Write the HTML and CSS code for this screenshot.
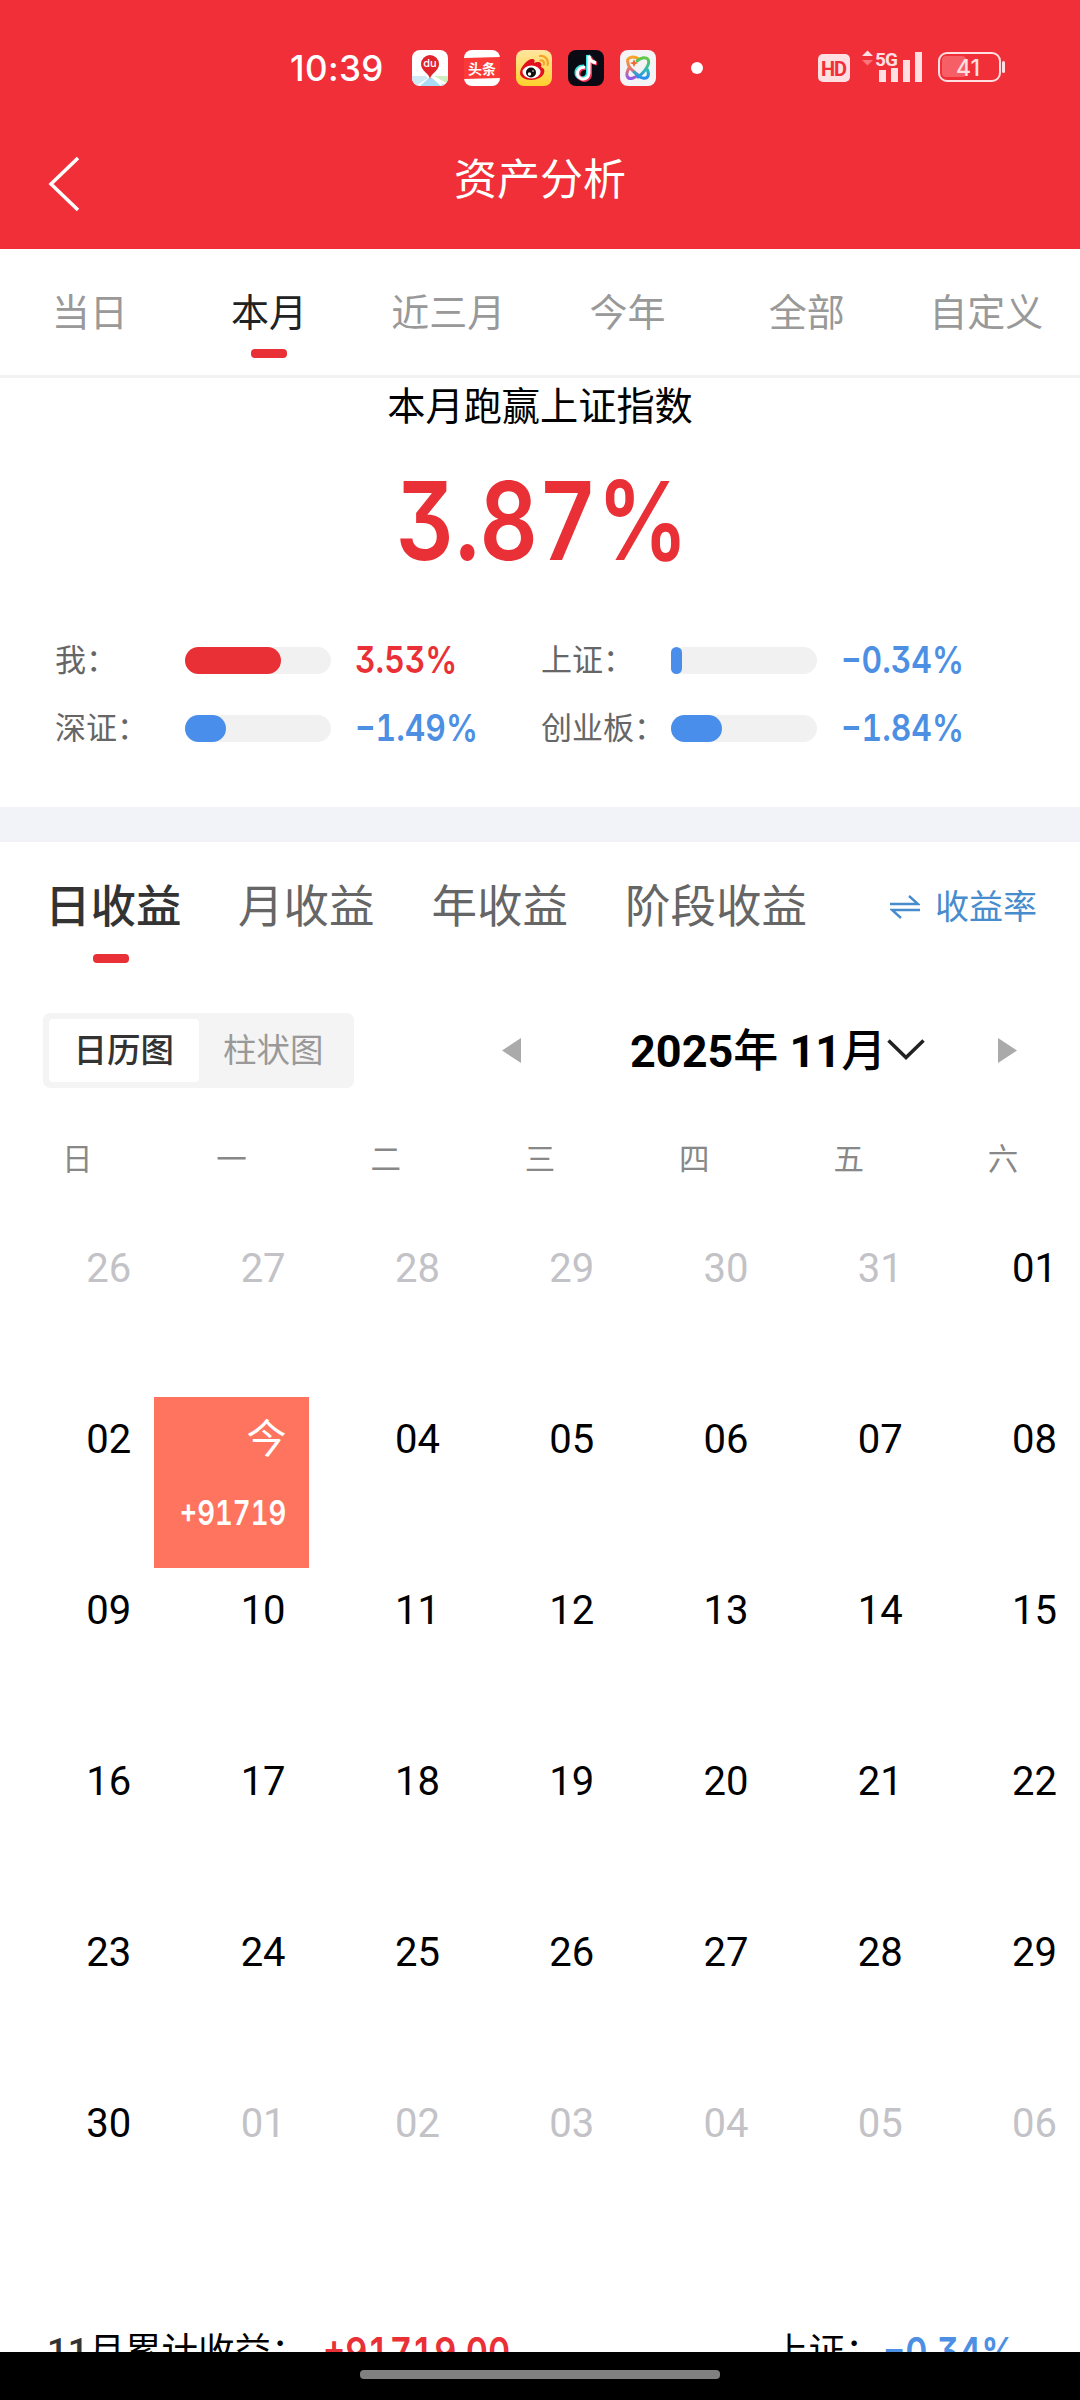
FILE: index.html
```html
<!DOCTYPE html>
<html lang="zh-CN">
<head>
<meta charset="utf-8">
<title>资产分析</title>
<link rel="stylesheet" href="styles.css">
</head>
<body>
<div class="app">
  <header class="top">
    <div class="status">
      <span class="clock">10:39</span>
      <div class="apps">
        <svg width="36" height="36" viewBox="0 0 36 36"><clipPath id="r"><rect width="36" height="36" rx="8"/></clipPath><g clip-path="url(#r)"><rect width="36" height="36" fill="#fff"/><path d="M0 26h13l3 2-12 8H0z" fill="#cdeaf5"/><path d="M22 26h14v8z" fill="#cfeec0"/><path d="M8 36l9-8h3l9 8z" fill="#a9dcf4"/><path d="M29 33l7 3h-5z" fill="#b5e4f5"/><path d="M18 29c-1-6-9-8-9-15a9 9 0 0 1 18 0c0 7-8 9-9 15z" fill="#e0242b"/></g><text x="18" y="17" class="du">du</text></svg>
        <svg width="36" height="36" viewBox="0 0 36 36"><rect width="36" height="36" rx="8" fill="#fff"/><path d="M0 8l36-1v21l-36 1z" fill="#fb3a38"/><text x="18" y="23.500" class="tt">头条</text></svg>
        <svg width="36" height="36" viewBox="0 0 36 36"><defs><linearGradient id="w" x2="0" y2="1"><stop stop-color="#ffe6a0"/><stop offset="1" stop-color="#ffd02c"/></linearGradient></defs><rect width="36" height="36" rx="8" fill="url(#w)"/><path d="M4 23C4 17 12 9 16 9c3 0 3 2 2 4 4-2 9-1 7 4 3 1 4 3 3 6-1 4-7 7-13 7S4 27 4 23z" fill="#e2101c"/><ellipse cx="15.500" cy="22" rx="9" ry="6.500" fill="#fff"/><circle cx="15" cy="22.500" r="5" fill="#111"/><circle cx="13.500" cy="24" r="1.700" fill="#fff"/><circle cx="17" cy="21" r=".8" fill="#fff"/><path d="M24 6c5-1 9 4 7.500 9M24.500 10.500c3-.5 4 2 3.300 4" fill="none" stroke="#f5a227" stroke-width="2.200" stroke-linecap="round"/></svg>
        <svg width="36" height="36" viewBox="0 0 36 36"><rect width="36" height="36" rx="8" fill="#090a14"/><g fill="none" stroke-width="4"><path d="M16 16.500c-5-.5-8 3-7.500 7s6 6.500 9.500 3.500c2-1.500 2-3 2-5V5c.5 4 3 6.500 7 7" stroke="#35e5e1"/><path d="M18 18c-5-.5-8 3-7.500 7s6 6.500 9.500 3.500c2-1.500 2-3 2-5V6.500c.5 4 3 6.500 7 7" stroke="#fb315c"/><path d="M17 17.200c-5-.5-8 3-7.500 7s6 6.500 9.500 3.500c2-1.500 2-3 2-5V5.700c.5 4 3 6.500 7 7" stroke="#fff" stroke-width="3"/></g></svg>
        <svg width="36" height="36" viewBox="0 0 36 36"><defs><linearGradient id="c" x2="0" y2="1"><stop stop-color="#f8a62b"/><stop offset=".5" stop-color="#e77b65"/><stop offset="1" stop-color="#9558e8"/></linearGradient><linearGradient id="d" x2="0" y2="1"><stop stop-color="#62c744"/><stop offset=".6" stop-color="#30b9b8"/><stop offset="1" stop-color="#288bf0"/></linearGradient></defs><rect width="36" height="36" rx="8" fill="#f4f4f7"/><g fill="none" stroke-width="3" stroke-linecap="round"><path d="M19 9C12 5 6 8 8 13c0 3 2 5 4 7l7 6M9 18c-4 7-2 12 4 10l4-2" stroke="url(#c)"/><path d="M17 11c7-6 14-3 11 4-2 5-6 9-10 12M27 19c3 6 1 10-4 9-3 0-6-3-9-6" stroke="url(#d)"/></g><path d="M14 9l1.200 3 3 1-3 1.200-1.200 3-1.200-3-3-1.200 3-1z" fill="#ef6a2c"/></svg>
      </div>
      <i class="dot"></i>
      <svg class="sys" width="190" height="36" viewBox="0 0 190 36"><rect x="0" y="4" width="32" height="28" rx="5" fill="#ffdfe1"/><text x="15.500" y="25.500" class="hd">HD</text><path d="M44 6l5.500-5.500L55 6z" fill="#ffdfe1"/><path d="M44 10l5.500 5.500L55 10z" fill="#f9777c"/><text x="57" y="15.500" class="g5">5G</text><g fill="#ffdfe1"><path d="M61 20h7v12h-7zM73 18h7v14h-7zM85 10h7v22h-7zM97 2h7v30h-7z"/></g><rect x="124" y="6" width="24" height="21" rx="4" fill="#f65f65"/><rect x="121" y="3" width="61" height="28" rx="8" fill="none" stroke="#ffdfe1" stroke-width="2"/><rect x="184" y="11" width="3" height="12" rx="1.500" fill="#ffdfe1"/><text x="150" y="25.500" class="bat">41</text></svg>
    </div>
    <div class="nav">
      <svg class="back" width="34" height="56" viewBox="0 0 34 56"><path d="M30 2L3 28l27 26" fill="none" stroke="#fff" stroke-width="3.500"/></svg>
      <h1>资产分析</h1>
    </div>
  </header>
  <nav class="ranges">
    <span>当日</span><span class="on">本月</span><span>近三月</span><span>今年</span><span>全部</span><span>自定义</span>
  </nav>
  <section class="summary">
    <div class="cap">本月跑赢上证指数</div>
    <div class="big"><span class="num">3.87%</span></div>
    <div class="cmp">
      <div class="item"><span class="lab">我：</span><div class="bar"><i class="red" style="width:96px"></i></div><span class="num v tred">3.53%</span></div>
      <div class="item"><span class="lab">上证：</span><div class="bar"><i style="width:11px"></i></div><span class="num v">−0.34%</span></div>
      <div class="item"><span class="lab">深证：</span><div class="bar"><i style="width:41px"></i></div><span class="num v">−1.49%</span></div>
      <div class="item"><span class="lab">创业板：</span><div class="bar"><i style="width:51px"></i></div><span class="num v">−1.84%</span></div>
    </div>
  </section>
  <section class="income">
    <div class="kinds">
      <span class="on">日收益</span><span>月收益</span><span>年收益</span><span>阶段收益</span>
      <a class="rate"><svg width="30" height="26" viewBox="0 0 30 26"><path d="M0 10h28L19 2M30 16H2l9 8" fill="none" stroke="#478ccd" stroke-width="2.400"/></svg>收益率</a>
    </div>
    <div class="tools">
      <div class="seg"><span class="on">日历图</span><span>柱状图</span></div>
      <svg class="prev" width="19" height="25" viewBox="0 0 19 25"><path d="M19 0v25L0 12.500z" fill="#aaa"/></svg>
      <div class="month"><b>2025<em>年</em> 11<em>月</em></b><svg width="38" height="22" viewBox="0 0 38 22"><path d="M1.500 1.500L19 18.500l17.500-17" fill="none" stroke="#222" stroke-width="3.500"/></svg></div>
      <svg class="next" width="19" height="25" viewBox="0 0 19 25"><path d="M0 0v25l19-12.500z" fill="#aaa"/></svg>
    </div>
    <div class="week"><span>日</span><span>一</span><span>二</span><span>三</span><span>四</span><span>五</span><span>六</span></div>
    <div class="days">
      <span class="off">26</span><span class="off">27</span><span class="off">28</span><span class="off">29</span><span class="off">30</span><span class="off">31</span><span>01</span>
      <span>02</span><div class="today">今<span class="num">+91719</span></div><span>04</span><span>05</span><span>06</span><span>07</span><span>08</span>
      <span>09</span><span>10</span><span>11</span><span>12</span><span>13</span><span>14</span><span>15</span>
      <span>16</span><span>17</span><span>18</span><span>19</span><span>20</span><span>21</span><span>22</span>
      <span>23</span><span>24</span><span>25</span><span>26</span><span>27</span><span>28</span><span>29</span>
      <span>30</span><span class="off">01</span><span class="off">02</span><span class="off">03</span><span class="off">04</span><span class="off">05</span><span class="off">06</span>
    </div>
    <div class="total"><span class="t1"><em>11</em>月累计收益：</span><span class="num tred t2">+91719.00</span><span class="t3">上证：</span><span class="num t4">−0.34%</span></div>
  </section>
  <footer class="home"><i></i></footer>
</div>
</body>
</html>
```
FILE: styles.css
```css
* { box-sizing: border-box; }
body { margin: 0; background: #fff; }
.app {
  width: 1080px; height: 2400px; overflow: hidden;
  display: flex; flex-direction: column;
  font-family: Roboto, "Noto Sans CJK SC", sans-serif;
  color: #000; white-space: nowrap;
}
svg { display: block; flex: none; }
i { display: block; font-style: normal; }
.num {
  font-family: Inter, Roboto, sans-serif; font-weight: 600;
  font-feature-settings: "cv09" 1, "tnum" 1;
  display: block; transform: scaleX(.86); transform-origin: 0 50%;
}
.tred { color: #e93036; }

.top { flex: none; height: 249px; background: #f12f39; color: #fff; }
.status { height: 134px; padding: 50px 0 0 290px; display: flex; align-items: flex-start; }
.clock { font: 500 35px/36px Inter, sans-serif; width: 122px; letter-spacing: .4px; }
.apps { display: flex; gap: 16px; }
.dot { width: 12px; height: 12px; border-radius: 6px; background: #fff; margin: 12px 0 0 35px; }
.sys { margin-left: 115px; overflow: visible; }
.du { font: 500 11px Inter, sans-serif; fill: #fff; text-anchor: middle; }
.tt { font: 700 14px "Noto Sans CJK SC", sans-serif; fill: #fff; text-anchor: middle; }
.hd { font: 700 20px Roboto, sans-serif; fill: #f12f39; text-anchor: middle; letter-spacing: -1px; }
.g5 { font: 700 19px Roboto, sans-serif; fill: #ffdfe1; letter-spacing: -1px; }
.bat { font: 500 23px Inter, sans-serif; fill: #ffdfe1; text-anchor: middle; }
.nav { display: grid; grid-template-columns: 80px 1fr 80px; align-items: start; }
.back { margin: 22px 0 0 48px; }
h1 { margin: 10px 0 0; font: 400 43px/64px "Noto Sans CJK SC", sans-serif; text-align: center; }

.ranges {
  flex: none; height: 129px; border-bottom: 3px solid #f2f2f2;
  display: grid; grid-template-columns: repeat(6, 179.300px);
  font-size: 38px; line-height: 56px; color: #999; text-align: center;
}
.ranges span { padding-top: 36px; }
.ranges .on { color: #222; }
.ranges .on::after, .kinds .on::after {
  content: ""; display: block; width: 36px; height: 9px; border-radius: 4px;
  background: #e93036; margin: 8px auto 0;
}

.summary { flex: none; height: 429px; }
.cap { font-size: 38.200px; line-height: 58px; text-align: center; }
.big { height: 172px; padding: 18px 0 0 396px; color: #e93036; }
.big .num { width: 340px; font-size: 109px; line-height: 132px; transform: scaleX(.835); }
.cmp { display: grid; grid-template-columns: 486px 486px; padding-left: 55px; grid-auto-rows: 68px; margin-top: 18px; }
.item { display: grid; grid-template-columns: 130px 146px 1fr; align-items: center; height: 68px; }
.lab { font-size: 31px; line-height: 66px; padding-top: 2px; color: #666; }
.bar { height: 27px; border-radius: 14px; background: #f1f1f1; }
.bar i { height: 27px; border-radius: 14px; background: #4a8eec; }
.bar .red { background: #e93036; }
.v { margin-left: 24px; font-size: 37px; line-height: 68px; color: #4c8fe3; }
.v.tred { color: #e93036; }

.income { flex: 1; min-height: 0; overflow: hidden; border-top: 35px solid #f2f3f8; }
.kinds { display: flex; padding: 33px 43px 0 45px; height: 170px; font-size: 45.500px; line-height: 66px; color: #666; }
.kinds > span { margin-right: 57px; }
.kinds .on { color: #333; font-weight: 500; width: 136px; }
.kinds .on::after { margin: 13px 0 0 48px; }
.kinds .rate { margin-left: auto; display: flex; gap: 15px; align-items: center; height: 64px; font-size: 34px; color: #478ccd; }
.tools { display: flex; height: 75px; margin-top: 1px; padding-left: 43px; align-items: center; }
.seg { width: 311px; height: 75px; background: #f4f4f4; border-radius: 7px; padding: 6px; display: flex; font-size: 33.500px; line-height: 64px; text-align: center; color: #999; }
.seg span { width: 150px; height: 63px; }
.seg .on { background: #fff; color: #333; border-radius: 4px; font-weight: 500; }
.prev { margin-left: 148px; }
.month { width: 367px; margin-left: 109px; display: flex; align-items: center; }
.month b { width: 257px; font-size: 45px; line-height: 60px; padding-top: 3px; font-weight: 700; }
.month em { font-style: normal; font-weight: 500; }
.month svg { margin-bottom: 2px; }
.next { margin-left: 1px; }
.week { display: grid; grid-template-columns: repeat(7, 154.300px); height: 138px; padding: 50px 0 0 0; font-size: 30.500px; line-height: 44px; color: #888; text-align: center; }
.days { display: grid; grid-template-columns: repeat(7, 154.300px); grid-auto-rows: 171px; text-align: right; font-size: 40px; line-height: 47px; }
.days > * { padding: 19px 23px 0 0; }
.off { color: #c2c2c7; }
.days .today { background: #ff745f; color: #fff; padding-right: 22px; }
.today .num { font-size: 34px; line-height: 44px; margin-top: 28px; transform: scaleX(.81); transform-origin: 100% 50%; }
.total { display: flex; font-size: 36.500px; line-height: 54px; margin-top: 73px; padding-left: 47px; }
.total .num { font-size: 40px; }
.total em { font-style: normal; font-weight: 500; color: #333; }
.t1 { width: 276px; }
.t2 { width: 449px; }
.t3 { width: 111px; }
.t4 { color: #4c8fe3; }

.home { flex: none; height: 48px; background: #000; padding: 18px 0 0 360px; }
.home i { width: 360px; height: 9px; border-radius: 4px; background: #808080; }
```
